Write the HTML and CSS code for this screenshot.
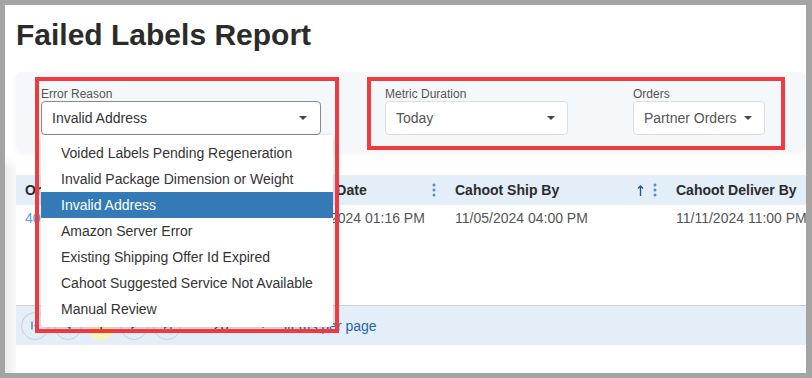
FILE: index.html
```html
<!DOCTYPE html>
<html lang="en">
<head>
  <meta charset="UTF-8">
  <meta name="viewport" content="width=device-width, initial-scale=1.0">
  <title>Failed Labels Report</title>
  <link rel="stylesheet" href="styles.css">
</head>

<body>
  <div class="window">
    <div class="gutter"></div>

    <main class="page">
      <h1>Failed Labels Report</h1>

      <section class="filters">
        <div class="field field-reason">
          <label>Error Reason</label>
          <div class="select select-open">
            <span>Invalid Address</span>
            <span class="caret"></span>
          </div>
          <ul class="popup">
            <li>Voided Labels Pending Regeneration</li>
            <li>Invalid Package Dimension or Weight</li>
            <li class="selected">Invalid Address</li>
            <li>Amazon Server Error</li>
            <li>Existing Shipping Offer Id Expired</li>
            <li>Cahoot Suggested Service Not Available</li>
            <li>Manual Review</li>
          </ul>
        </div>

        <div class="field field-duration">
          <label>Metric Duration</label>
          <div class="select">
            <span>Today</span>
            <span class="caret"></span>
          </div>
        </div>

        <div class="field field-orders">
          <label>Orders</label>
          <div class="select">
            <span>Partner Orders</span>
            <span class="caret"></span>
          </div>
        </div>

        <!-- annotation boxes -->
        <div class="mark mark-left"></div>
        <div class="mark mark-right"></div>
      </section>

      <div class="grid">
        <div class="grid-body">
          <table>
            <colgroup>
              <col style="width:130px">
              <col style="width:137px">
              <col style="width:163px">
              <col style="width:221px">
              <col style="width:200px">
            </colgroup>
            <thead>
              <tr>
                <th><div class="th"><span>Order #</span></div></th>
                <th><div class="th"><span>Label Created</span></div></th>
                <th>
                  <div class="th">
                    <span>Failed Date</span>
                    <svg class="dots" width="4" height="14" viewBox="0 0 4 14"><circle cx="2" cy="2" r="1.5"/><circle cx="2" cy="7" r="1.5"/><circle cx="2" cy="12" r="1.5"/></svg>
                  </div>
                </th>
                <th>
                  <div class="th">
                    <span>Cahoot Ship By</span>
                    <svg class="sort" width="7" height="11" viewBox="0 0 7 11"><path d="M3.5 1v10M1 3.5L3.5 1 6 3.5" fill="none" stroke="#1d5a8c" stroke-width="1.4"/></svg>
                    <svg class="dots" width="4" height="14" viewBox="0 0 4 14"><circle cx="2" cy="2" r="1.5"/><circle cx="2" cy="7" r="1.5"/><circle cx="2" cy="12" r="1.5"/></svg>
                  </div>
                </th>
                <th><div class="th"><span>Cahoot Deliver By</span></div></th>
              </tr>
            </thead>
            <tbody>
              <tr>
                <td><a href="#">4001938265</a></td>
                <td>11/04/2024 09:12 AM</td>
                <td>11/04/2024 01:16 PM</td>
                <td>11/05/2024 04:00 PM</td>
                <td>11/11/2024 11:00 PM</td>
              </tr>
            </tbody>
          </table>
        </div>

        <div class="pager">
          <span class="pg-btn">
            <svg width="9" height="9" viewBox="0 0 9 9"><path d="M1 0.5v8" stroke="#4d7fb3" stroke-width="1.4"/><path d="M8 0.5v8L3 4.5z" fill="#4d7fb3"/></svg>
          </span>
          <span class="pg-btn">
            <svg width="6" height="9" viewBox="0 0 6 9"><path d="M5.5 0.5v8L0.5 4.5z" fill="#2f5f8f"/></svg>
          </span>
          <span class="pg-btn pg-current">1</span>
          <span class="pg-btn">
            <svg width="6" height="9" viewBox="0 0 6 9"><path d="M0.5 0.5v8L5.5 4.5z" fill="#2f5f8f"/></svg>
          </span>
          <span class="pg-btn">
            <svg width="9" height="9" viewBox="0 0 9 9"><path d="M1 0.5v8L6 4.5z" fill="#4d7fb3"/><path d="M8 0.5v8" stroke="#4d7fb3" stroke-width="1.4"/></svg>
          </span>
          <span class="page-size">
            <span>20</span>
            <span class="caret"></span>
          </span>
          <span class="pg-label">items per page</span>
        </div>
      </div>
    </main>
  </div>
</body>
</html>
```

FILE: styles.css
```css
body {
  margin: 0;
  padding: 5px 6px 5px 5px;
  background: #a4a4a4;
  font-family: "Liberation Sans", Arial, sans-serif;
  font-size: 14px;
  color: #333;
}
.window {
  display: flex;
  height: 368px;
  background: #fff;
  overflow: hidden;
}
.gutter {
  width: 11px;
  flex: none;
  background: linear-gradient(to bottom, #fff 150px, transparent 165px),
              linear-gradient(to right, #ececec, #f9f9f9);
}
.page {
  flex: 1;
  min-width: 0;
}
h1 {
  margin: 12px 0 19px;
  font-size: 30px;
  line-height: 36px;
  font-weight: bold;
  color: #2b2b2b;
}

/* filter panel */
.filters {
  position: relative;
  display: flex;
  align-items: flex-start;
  padding: 15px 0 15px 25px;
  background: #f5f8fb;
  border-radius: 5px;
  box-shadow: 0 3px 6px rgba(0, 0, 0, 0.05);
  z-index: 2;
}
.field {
  position: relative;
}
.field label {
  display: block;
  font-size: 12px;
  line-height: 14px;
  color: #555;
}
.field-reason { width: 280px; }
.field-duration { width: 183px; margin-left: 64px; }
.field-orders { width: 132px; margin-left: 65px; }

.select {
  box-sizing: border-box;
  display: flex;
  align-items: center;
  justify-content: space-between;
  height: 34px;
  padding: 0 12px 0 10px;
  background: #fff;
  border: 1px solid #dedede;
  border-radius: 4px;
  color: #555;
}
.select-open {
  border-color: #8a8a8a;
  color: #333;
  padding-right: 13px;
}
.caret {
  width: 0;
  height: 0;
  border-left: 4px solid transparent;
  border-right: 4px solid transparent;
  border-top: 4px solid #444;
}

.popup {
  position: absolute;
  left: 0;
  top: 48px;
  width: 292px;
  margin: 0;
  padding: 5px 0;
  list-style: none;
  background: #fff;
  border-radius: 0 0 4px 4px;
  box-shadow: 0 2px 6px rgba(0, 0, 0, 0.18);
  z-index: 3;
}
.popup li {
  height: 26px;
  line-height: 26px;
  padding-left: 20px;
  color: #333;
}
.popup li.selected {
  background: #337ab7;
  color: #fff;
}

.mark {
  position: absolute;
  border: 4px solid #ef3b40;
  box-sizing: border-box;
  z-index: 4;
}
.mark-left {
  left: 19px;
  top: 5px;
  width: 304px;
  height: 256px;
}
.mark-right {
  left: 351px;
  top: 5px;
  width: 418px;
  height: 73px;
}

/* grid */
.grid {
  margin-top: 25px;
}
.grid-body {
  height: 130px;
  overflow: hidden;
}
table {
  width: 821px;
  table-layout: fixed;
  border-collapse: collapse;
}
th {
  height: 30px;
  padding: 0 9px;
  background: #e3eef9;
  text-align: left;
  font-weight: bold;
  color: #2b2b2b;
  white-space: nowrap;
}
.th {
  display: flex;
  align-items: center;
}
.th span {
  flex: 1;
}
.th .sort {
  margin-right: 9px;
}
.dots {
  fill: #4a90d9;
  margin-right: 1px;
}
td {
  height: 25px;
  padding: 0 9px;
  color: #555;
  white-space: nowrap;
}
td a {
  color: #4a9fe8;
  text-decoration: none;
}

.pager {
  display: flex;
  align-items: center;
  height: 39px;
  padding-left: 5px;
  background: #e4eef9;
  border-top: 1px solid #c8cdd3;
}
.pg-btn {
  box-sizing: border-box;
  display: flex;
  align-items: center;
  justify-content: center;
  width: 28px;
  height: 28px;
  margin-right: 5px;
  border: 1px solid #c9ced4;
  border-radius: 50%;
  color: #333;
}
.pg-current {
  background: #f9f5b5;
  border-color: #f9f5b5;
}
.page-size {
  display: flex;
  align-items: center;
  justify-content: space-between;
  width: 54px;
  margin-left: 17px;
  padding: 0 7px 0 10px;
  color: #444;
}
.pg-label {
  margin-left: 10px;
  color: #1f68a8;
}
```
